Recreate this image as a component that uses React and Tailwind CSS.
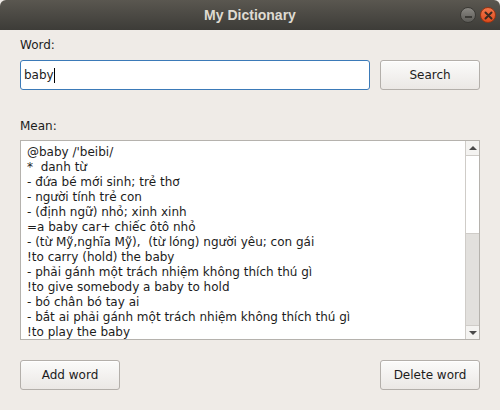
import React from "react";

const lines = [
  "@baby /'beibi/",
  "*  danh từ",
  "- đứa bé mới sinh; trẻ thơ",
  "- người tính trẻ con",
  "- (định ngữ) nhỏ; xinh xinh",
  "=a baby car+ chiếc ôtô nhỏ",
  "- (từ Mỹ,nghĩa Mỹ),  (từ lóng) người yêu; con gái",
  "!to carry (hold) the baby",
  "- phải gánh một trách nhiệm không thích thú gì",
  "!to give somebody a baby to hold",
  "- bó chân bó tay ai",
  "- bắt ai phải gánh một trách nhiệm không thích thú gì",
  "!to play the baby",
];

function Btn({ children }) {
  return (
    <button className="w-[100px] h-[30px] rounded-[3px] border border-[#b3afaa] bg-gradient-to-b from-[#fbfbfa] to-[#ebe8e5] text-[12px] text-[#1c1c1c] shadow-[inset_0_1px_0_#ffffff]">
      {children}
    </button>
  );
}

export default function App() {
  return (
    <div className="w-[500px] h-[410px] bg-[#efebe7] flex flex-col font-['DejaVu_Sans',sans-serif] overflow-hidden">
      {/* title bar */}
      <div className="h-[30px] shrink-0 rounded-t-[6px] bg-gradient-to-b from-[#5a5750] to-[#3d3c38] flex items-center relative">
        <div className="flex-1 text-center text-[14px] font-bold text-[#dfdbd2] font-['Liberation_Sans',sans-serif]">My Dictionary</div>
        <div className="absolute right-[4px] top-[7px] flex gap-[4px]">
          <div className="w-[16px] h-[16px] rounded-full bg-gradient-to-b from-[#8a8883] to-[#5c5b57] border border-[#3a3935] flex items-center justify-center">
            <div className="w-[7px] h-[2px] bg-[#3c3b37] mt-[3px]" />
          </div>
          <div className="w-[16px] h-[16px] rounded-full bg-gradient-to-b from-[#f4774a] to-[#dd4a1b] border border-[#9a3412] flex items-center justify-center">
            <svg width="9" height="9" viewBox="0 0 9 9">
              <path d="M1.5 1.5 L7.5 7.5 M7.5 1.5 L1.5 7.5" stroke="#3c2a20" strokeWidth="2" strokeLinecap="round" />
            </svg>
          </div>
        </div>
      </div>

      <div className="flex-1 px-[20px] flex flex-col">
        <div className="mt-[7px] h-[16px] text-[12px] text-[#1c1c1c] leading-[16px]">Word:</div>
        <div className="mt-[7px] flex gap-[10px]">
          <div className="w-[350px] h-[30px] rounded-[3px] border border-[#3b7ab8] bg-white flex items-center px-[3px] text-[12px] text-[#1c1c1c]">
            baby<span className="inline-block w-[1px] h-[15px] bg-black" />
          </div>
          <Btn>Search</Btn>
        </div>
        <div className="mt-[28px] h-[16px] text-[12px] text-[#1c1c1c] leading-[16px]">Mean:</div>
        <div className="mt-[6px] h-[200px] border border-[#b5b2ad] bg-white flex">
          <div className="flex-1 overflow-hidden pl-[6px] pt-[4px] text-[12px] leading-[15px] text-[#1c1c1c] whitespace-pre">
            {lines.map((l, i) => (
              <div key={i}>{l}</div>
            ))}
          </div>
          <div className="w-[14px] border-l border-[#cfccc8] flex flex-col">
            <div className="h-[15px] bg-[#f4f3f1] border-b border-[#cfccc8] flex items-center justify-center">
              <div className="w-0 h-0 border-x-[4px] border-x-transparent border-b-[4px] border-b-[#4a4a4a]" />
            </div>
            <div className="h-[78px] bg-white border-b border-[#cfccc8]" />
            <div className="flex-1 bg-[#e2e0dd]" />
            <div className="h-[14px] bg-[#f4f3f1] border-t border-[#cfccc8] flex items-center justify-center">
              <div className="w-0 h-0 border-x-[4px] border-x-transparent border-t-[4px] border-t-[#4a4a4a]" />
            </div>
          </div>
        </div>
        <div className="mt-[20px] flex justify-between">
          <Btn>Add word</Btn>
          <Btn>Delete word</Btn>
        </div>
      </div>
    </div>
  );
}
